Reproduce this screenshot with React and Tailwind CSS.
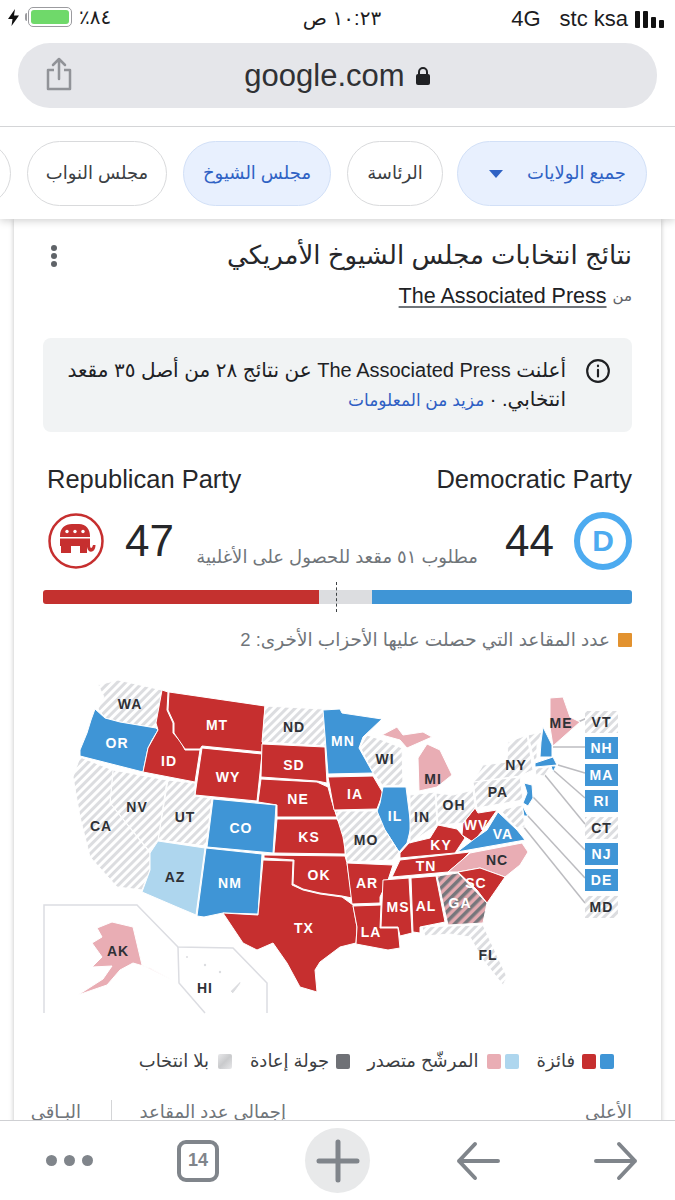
const red = "#c62f2f";
const blue = "#3f95d6";
const pink = "#e9adb4";
const sky = "#aed6ee";

const states = [
  ["WA", "h", "98,685 118,680 162,690 156,728 120,722 105,718 98,709 104,697"],
  ["OR", "b", "95,709 105,718 120,722 156,728 158,730 152,740 148,748 143,772 80,756 80,750 87,733 91,720"],
  ["ID", "r", "162,690 168,692 167,710 173,723 173,733 181,742 185,750 200,750 195,782 143,772 148,748 158,730 156,723"],
  ["MT", "r", "169,692 265,706 262,752 202,746 200,749 185,749 174,733 174,723 168,710"],
  ["WY", "r", "202,748 262,754 257,801 195,795"],
  ["ND", "h", "265,706 323,709 327,746 262,742"],
  ["SD", "r", "262,744 325,747 327,783 317,781 261,777"],
  ["NE", "r", "261,779 317,782 328,787 332,802 337,817 277,817 277,805 258,802"],
  ["KS", "r", "277,819 337,819 343,829 345,837 345,854 274,853"],
  ["CO", "b", "213,799 276,805 273,853 207,847"],
  ["UT", "h", "168,780 195,783 195,796 212,798 206,846 158,840"],
  ["NV", "h", "113,770 167,780 158,840 150,852 110,803"],
  ["CA", "h", "80,757 113,770 110,803 150,853 150,870 142,890 117,887 90,857 80,817 73,777"],
  ["AZ", "s", "158,841 205,848 196,915 177,907 142,892 150,870 150,853"],
  ["NM", "b", "206,848 262,854 258,914 223,913 204,917 197,916"],
  ["TX", "r", "263,860 293,861 292,885 303,890 320,894 342,897 353,905 357,927 356,943 340,947 320,962 315,970 317,992 300,987 287,963 273,943 257,950 243,943 223,913 258,915"],
  ["OK", "r", "264,855 345,856 347,863 352,898 342,896 320,893 303,889 293,884 294,860 264,858"],
  ["AR", "r", "347,863 393,865 388,880 380,897 380,903 352,904"],
  ["LA", "r", "353,906 381,905 380,928 398,928 400,948 388,950 356,944 357,927"],
  ["MS", "r", "383,880 409,878 412,933 400,936 398,927 381,927 382,903"],
  ["AL", "r", "411,878 436,876 445,922 420,927 420,933 413,932"],
  ["TN", "r", "400,860 470,852 460,862 448,872 392,877"],
  ["KY", "r", "400,853 409,843 430,838 438,825 457,829 465,838 455,853 400,858"],
  ["WV", "r", "475,808 478,813 497,810 483,830 473,842 462,835 463,823"],
  ["VA", "b", "457,852 477,837 487,830 498,812 517,830 525,840"],
  ["NC", "p", "448,872 470,853 522,843 528,852 520,865 505,877 480,868 458,872"],
  ["SC", "r", "458,872 480,868 505,877 487,903 477,890"],
  ["GA", "g", "437,876 458,873 487,903 483,923 448,925"],
  ["FL", "h", "422,927 448,926 483,925 507,977 503,985 483,960 470,937 450,934 425,936"],
  ["MIU", "p", "382,735 397,727 403,735 423,732 432,737 407,748 400,740"],
  ["MI", "p", "418,758 427,744 440,750 452,775 437,787 419,791"],
  ["WI", "h", "360,747 367,735 382,740 402,748 403,785 383,786 373,773"],
  ["MN", "b", "323,710 340,709 342,713 382,719 363,737 359,748 373,773 328,774"],
  ["IA", "r", "328,777 373,776 383,793 377,809 334,810"],
  ["IL", "b", "383,787 406,787 411,827 407,843 399,852 387,833 375,817 380,803"],
  ["MO", "h", "335,811 377,811 385,830 399,852 392,860 347,862 343,837"],
  ["IN", "h", "410,795 435,792 437,825 410,843"],
  ["OH", "h", "436,793 453,795 473,790 475,808 463,823 438,825"],
  ["PA", "h", "473,782 520,777 523,800 477,808"],
  ["NY", "h", "483,765 507,762 508,742 527,735 533,770 520,776 473,782"],
  ["VTS", "h", "528,735 542,732 537,745 537,760 534,760"],
  ["ME", "p", "550,698 563,697 570,717 580,722 553,746 550,727"],
  ["NH", "b", "543,727 552,745 552,757 540,757 541,742"],
  ["MA", "b", "535,763 553,757 557,765 535,767"],
  ["RI", "b", "551,766 556,766 553,772"],
  ["CT", "h", "535,768 550,767 544,776 536,775"],
  ["NJ", "b", "524,783 532,785 533,798 528,806 523,803 527,793"],
  ["DE", "b", "522,805 528,816 524,816"],
  ["MD", "h", "500,810 522,805 525,827 517,828"],
  ["AK", "p", "97,928 112,922 133,927 142,965 172,980 150,968 133,963 120,970 107,985 78,995 103,979 112,966 92,967 102,957 92,943 102,937"],
  ["HI", "h", "229,990 240,980 241,983 233,994"],
];

const fills = { h: "url(#hatch)", b: blue, r: red, p: pink, s: sky, g: "url(#runoff)" };

const dark = ["WA", "ND", "WI", "MI", "NY", "IN", "OH", "PA", "CA", "NV", "UT", "MO", "AZ", "NC", "FL", "AK", "HI", "ME"];
const labels = [
  ["WA", 130, 704], ["OR", 117, 743], ["ID", 169, 761], ["MT", 217, 725], ["ND", 294, 727], ["WY", 228, 777], ["SD", 294, 765],
  ["NE", 298, 799], ["MN", 343, 741], ["WI", 385, 759], ["MI", 433, 779], ["NY", 516, 765], ["IA", 355, 794], ["IL", 395, 816],
  ["IN", 422, 817], ["OH", 454, 805], ["PA", 498, 792], ["CA", 101, 826], ["NV", 137, 807], ["UT", 185, 817], ["CO", 241, 828],
  ["KS", 309, 837], ["MO", 366, 840], ["AZ", 175, 877], ["NM", 230, 883], ["OK", 319, 875], ["AR", 367, 883], ["TN", 426, 866],
  ["KY", 441, 845], ["WV", 476, 825], ["VA", 503, 834], ["NC", 497, 860], ["SC", 476, 883], ["GA", 460, 903], ["MS", 398, 907],
  ["AL", 426, 906], ["LA", 371, 932], ["TX", 304, 928], ["FL", 488, 955], ["AK", 118, 951], ["HI", 205, 988], ["ME", 561, 723],
];

const boxes = [
  ["VT", 711, false], ["NH", 737, true], ["MA", 764, true], ["RI", 790, true],
  ["CT", 817, false], ["NJ", 843, true], ["DE", 869, true], ["MD", 896, false],
];

const leaders = [
  "578,722 587,718", "553,747 585,747", "558,765 585,773", "553,770 585,798",
  "544,774 585,824", "533,797 585,850", "527,815 585,878", "510,810 585,903",
];

function UsMap() {
  return (
    <svg viewBox="40 675 585 340" className="block w-[585px] h-[340px]">
      <defs>
        <pattern id="hatch" width="6" height="6" patternUnits="userSpaceOnUse" patternTransform="rotate(45)">
          <rect width="6" height="6" fill="#ffffff" />
          <rect width="3" height="6" fill="#dcdde0" />
        </pattern>
        <pattern id="runoff" width="7" height="7" patternUnits="userSpaceOnUse" patternTransform="rotate(45)">
          <rect width="7" height="7" fill="#e3aab0" />
          <rect width="3.5" height="7" fill="#77777c" />
        </pattern>
      </defs>
      <polyline points="44,1013 44,905 137,905 178,947 233,948 267,983 267,1013" fill="none" stroke="#dcdde2" strokeWidth="1.5" />
      <polyline points="178,947 179,983 205,1013" fill="none" stroke="#dcdde2" strokeWidth="1.5" />
      {leaders.map((p) => (
        <polyline key={p} points={p} fill="none" stroke="#bcbcc0" strokeWidth="1.5" />
      ))}
      {states.map(([id, kind, pts]) => (
        <polygon key={id} points={pts} fill={fills[kind]} stroke="#ffffff" strokeWidth="1" strokeLinejoin="round" />
      ))}
      <circle cx="187" cy="957" r="1" fill="#dcdde0" />
      <circle cx="205" cy="965" r="1.2" fill="#dcdde0" />
      <circle cx="220" cy="972" r="1.2" fill="#dcdde0" />
      {labels.map(([name, x, y]) => (
        <text
          key={name}
          x={x}
          y={y + 5}
          textAnchor="middle"
          fill={dark.includes(name) ? "#2f3136" : "#ffffff"}
          className="font-['Liberation_Sans',sans-serif] text-[14px] font-bold tracking-[1px]"
        >
          {name}
        </text>
      ))}
      {boxes.map(([name, y, filled]) => (
        <g key={name}>
          <rect x="585" y={y} width="33" height="22" fill={filled ? blue : "url(#hatch)"} />
          <text
            x="601.5"
            y={y + 16}
            textAnchor="middle"
            fill={filled ? "#ffffff" : "#2f3136"}
            className="font-['Liberation_Sans',sans-serif] text-[14px] font-bold tracking-[1px]"
          >
            {name}
          </text>
        </g>
      ))}
    </svg>
  );
}

function Chip({ active, className, children }) {
  return (
    <div
      className={
        "h-[65px] shrink-0 rounded-full border flex items-center justify-center text-[18px] " +
        (active ? "bg-[#e8f0fe] border-[#d2e0f7] text-[#2f62c4] " : "bg-white border-[#d9dadc] text-[#3c4043] ") +
        className
      }
    >
      {children}
    </div>
  );
}

function StatusBar() {
  return (
    <div dir="ltr" className="h-[43px] flex items-start justify-between pl-[8px] pr-[11px] pt-[7px] text-[#1c1c1e]">
      <div className="flex items-center">
        <svg width="11" height="17" viewBox="0 0 11 17" className="mr-[6px]">
          <path d="M7 0 L0 10 H4.5 L3.5 17 L11 6.5 H6 Z" fill="#111" />
        </svg>
        <div className="w-[2px] h-[8px] rounded-l-[2px] bg-[#9b9b9f] mr-[1px]" />
        <div className="w-[44px] h-[20px] rounded-[5px] border border-[#9b9b9f] p-[2px]">
          <div className="w-full h-full rounded-[3px] bg-[#6fd96a]" />
        </div>
        <span className="ml-[7px] text-[20px] leading-[20px]">٪٨٤</span>
      </div>
      <div dir="rtl" className="absolute left-[296px] w-[92px] text-center text-[20px] leading-[22px] font-medium">١٠:٢٣ ص</div>
      <div className="flex items-center text-[22px] leading-[24px]">
        <span>4G</span>
        <span className="ml-[19px]">stc ksa</span>
        <div className="ml-[7px] flex items-end gap-[3px] h-[17px]">
          <div className="w-[5px] h-[17px] rounded-[1px] bg-[#111]" />
          <div className="w-[5px] h-[17px] rounded-[1px] bg-[#111]" />
          <div className="w-[5px] h-[11px] rounded-[1px] bg-[#111]" />
          <div className="w-[5px] h-[8px] rounded-[1px] bg-[#111]" />
        </div>
      </div>
    </div>
  );
}

function UrlBar() {
  return (
    <div dir="ltr" className="mx-[18px] h-[65px] rounded-[32px] bg-[#e5e6ea] relative flex items-center justify-center">
      <svg width="26" height="34" viewBox="0 0 26 34" fill="none" stroke="#919398" strokeWidth="2.5" className="absolute left-[28px] top-[14px]">
        <path d="M8 13 H2 V32 H24 V13 H18" strokeLinejoin="round" />
        <path d="M13 22 V2 M7 8 L13 2 L19 8" strokeLinecap="round" strokeLinejoin="round" />
      </svg>
      <span className="text-[31px] leading-[36px] text-[#303134]">google.com</span>
      <svg width="16" height="20" viewBox="0 0 16 20" className="ml-[10px]">
        <path d="M4 9 V6 a4 4 0 0 1 8 0 V9" fill="none" stroke="#202124" strokeWidth="2" />
        <rect x="1" y="8" width="14" height="11" rx="2" fill="#202124" />
      </svg>
    </div>
  );
}

function Elephant() {
  return (
    <svg width="58" height="58" viewBox="0 0 58 58">
      <circle cx="29" cy="29" r="26.5" fill="#ffffff" stroke={red} strokeWidth="2.5" />
      <path d="M13 24 C13 16 18 12 25 12 H32 C39 12 43 17 43 24 V33 C43 37 45 37 46 33 L48.5 33 C48.5 41 41 42 40 35 V41 H33 V34 H24 V41 H14 V34 H13 Z" fill={red} />
      <rect x="12" y="25" width="32" height="1.5" fill="#ffffff" />
      <circle cx="20" cy="19.5" r="1.7" fill="#ffffff" />
      <circle cx="28" cy="19.5" r="1.7" fill="#ffffff" />
      <circle cx="36" cy="19.5" r="1.7" fill="#ffffff" />
    </svg>
  );
}

function BottomBar() {
  return (
    <div dir="ltr" className="absolute left-0 right-0 bottom-0 h-[80px] bg-white border-t border-[#cfd0d3] text-[#80858b]">
      <div className="h-full relative flex items-center">
        <div className="ml-[46px] flex gap-[7px]">
          <div className="w-[11px] h-[11px] rounded-full bg-[#80858b]" />
          <div className="w-[11px] h-[11px] rounded-full bg-[#80858b]" />
          <div className="w-[11px] h-[11px] rounded-full bg-[#80858b]" />
        </div>
        <div className="ml-[84px] w-[42px] h-[42px] rounded-[9px] border-[4px] border-[#80858b] flex items-center justify-center text-[18px] font-bold">14</div>
        <div className="ml-[86px] w-[65px] h-[65px] rounded-full bg-[#e8e9ea] flex items-center justify-center">
          <svg width="44" height="44" viewBox="0 0 44 44" stroke="#80858b" strokeWidth="5" strokeLinecap="round">
            <path d="M22 3 V41 M3 22 H41" />
          </svg>
        </div>
        <svg width="44" height="40" viewBox="0 0 44 40" fill="none" stroke="#80858b" strokeWidth="4" strokeLinecap="round" strokeLinejoin="round" className="ml-[86px]">
          <path d="M42 20 H3 M19 3 L3 20 L19 37" />
        </svg>
        <svg width="44" height="40" viewBox="0 0 44 40" fill="none" stroke="#80858b" strokeWidth="4" strokeLinecap="round" strokeLinejoin="round" className="ml-[94px]">
          <path d="M2 20 H41 M25 3 L41 20 L25 37" />
        </svg>
      </div>
    </div>
  );
}

export default function App() {
  return (
    <div dir="rtl" className="relative w-[675px] h-[1200px] overflow-hidden bg-white font-['Liberation_Sans','DejaVu_Sans',sans-serif]">
      <div className="relative z-10 h-[219px] bg-white shadow-[0_2px_8px_rgba(0,0,0,0.18)]">
        <StatusBar />
        <UrlBar />
        <div className="mt-[18px] border-t border-[#d4d5d7] flex gap-[16px] pt-[14px] pr-[28px] overflow-hidden">
          <Chip active className="w-[190px]">
            <div className="w-full flex items-center pr-[20px] gap-[24px]">
              <span>جميع الولايات</span>
              <span className="w-0 h-0 border-x-[7px] border-x-transparent border-t-[8px] border-t-[#2f62c4]" />
            </div>
          </Chip>
          <Chip className="w-[96px] -mr-[2px]">الرئاسة</Chip>
          <Chip active className="w-[148px]">مجلس الشيوخ</Chip>
          <Chip className="w-[140px]">مجلس النواب</Chip>
          <Chip className="w-[100px]"> </Chip>
        </div>
      </div>

      <div className="mx-[14px] h-[981px] bg-white shadow-[0_0_5px_rgba(0,0,0,0.25)] pt-[18px] px-[29px] text-[#202124]">
        <div className="flex items-start justify-between">
          <h1 className="text-[26px] leading-[36px] font-normal text-[#26272a]">نتائج انتخابات مجلس الشيوخ الأمريكي</h1>
          <div className="mt-[8px] ml-[8px] flex flex-col gap-[2px]">
            <div className="w-[6px] h-[6px] rounded-full bg-[#5f6368]" />
            <div className="w-[6px] h-[6px] rounded-full bg-[#5f6368]" />
            <div className="w-[6px] h-[6px] rounded-full bg-[#5f6368]" />
          </div>
        </div>
        <p className="mt-[10px] text-[21.5px] leading-[26px] flex items-center gap-[6px]">
          <span className="text-[15px] text-[#5f6368]">من</span>
          <span dir="ltr" className="underline underline-offset-3 decoration-[#70757a]">The Associated Press</span>
        </p>

        <div className="mt-[29px] h-[94px] rounded-[8px] bg-[#f1f3f4] flex pt-[20px] pr-[21px]">
          <svg width="26" height="26" viewBox="0 0 24 24" fill="none" stroke="#202124" strokeWidth="2" strokeLinecap="round" className="shrink-0">
            <circle cx="12" cy="12" r="10" />
            <path d="M12 11 V17 M12 7 V7.5" />
          </svg>
          <p className="mr-[19px] w-[500px] text-[20px] leading-[29px] -mt-[2px]">
            أعلنت The Associated Press عن نتائج ٢٨ من أصل ٣٥ مقعد انتخابي. · <span className="text-[17px] text-[#2f5fc4]">مزيد من المعلومات</span>
          </p>
        </div>

        <div className="mt-[30px] flex justify-between text-[25.5px] leading-[34px] text-[#26272a]">
          <span dir="ltr">Democratic Party</span>
          <span dir="ltr" className="ml-[4px]">Republican Party</span>
        </div>

        <div className="mt-[15px] h-[60px] flex items-center justify-between relative">
          <div className="flex items-center gap-[20px]">
            <div className="w-[58px] h-[58px] rounded-full border-[6px] border-[#4dabf0] flex items-center justify-center text-[30px] leading-none font-bold text-[#4dabf0]">D</div>
            <span className="text-[44px] leading-none text-[#26272a]">44</span>
          </div>
          <p className="absolute right-[154px] top-[36px] text-[18px] leading-[20px] text-[#70757a] whitespace-nowrap">مطلوب ٥١ مقعد للحصول على الأغلبية</p>
          <div className="flex items-center gap-[20px] ml-[4px]">
            <span className="text-[44px] leading-none text-[#26272a]">47</span>
            <Elephant />
          </div>
        </div>

        <div dir="ltr" className="relative mt-[19px] h-[14px] flex rounded-[3px] overflow-hidden">
          <div className="w-[276px] bg-[#c4312f]" />
          <div className="w-[53px] bg-[#dcdde0]" />
          <div className="flex-1 bg-[#3f95d6]" />
        </div>
        <div className="h-[30px] -mt-[22px] mb-[-8px] relative mr-[295px] w-0 border-r border-dashed border-[#3c4043]" />

        <div className="mt-[24px] flex items-center gap-[8px] text-[18.5px] leading-[24px] text-[#70757a]">
          <div className="w-[14px] h-[14px] bg-[#e2922f] rounded-[1px]" />
          <span>عدد المقاعد التي حصلت عليها الأحزاب الأخرى: 2</span>
        </div>

        <div dir="ltr" className="mt-[23px] -mx-[3px]">
          <UsMap />
        </div>

        <div className="mt-[34px] mr-[18px] flex items-center text-[18px] leading-[24px] text-[#3c4043]">
          <div className="flex gap-[4px]">
            <div className="w-[14px] h-[15px] rounded-[2px] bg-[#3f95d6]" />
            <div className="w-[14px] h-[15px] rounded-[2px] bg-[#c62f2f]" />
          </div>
          <span className="mr-[7px]">فائزة</span>
          <div className="mr-[18px] flex gap-[4px]">
            <div className="w-[14px] h-[15px] rounded-[2px] bg-[#aed6ee]" />
            <div className="w-[14px] h-[15px] rounded-[2px] bg-[#e9adb4]" />
          </div>
          <span className="mr-[8px]">المرشّح متصدر</span>
          <div className="mr-[17px] w-[14px] h-[15px] rounded-[2px] bg-[#6f7176]" />
          <span className="mr-[7px]">جولة إعادة</span>
          <div className="mr-[18px] w-[14px] h-[15px] rounded-[2px] bg-[linear-gradient(135deg,#e8e8ea_0%,#c9cacc_50%,#e8e8ea_100%)]" />
          <span className="mr-[9px]">بلا انتخاب</span>
        </div>

        <div className="mt-[27px] flex text-[18px] leading-[24px] text-[#70757a]">
          <span className="w-[60px] shrink-0 whitespace-nowrap">الأعلى</span>
          <span className="mr-[286px] w-[140px] shrink-0 whitespace-nowrap">إجمالي عدد المقاعد</span>
          <span className="mr-[34px] border-r border-[#d4d5d7] pr-[30px] whitespace-nowrap">البـاقي</span>
        </div>
      </div>

      <BottomBar />
    </div>
  );
}
